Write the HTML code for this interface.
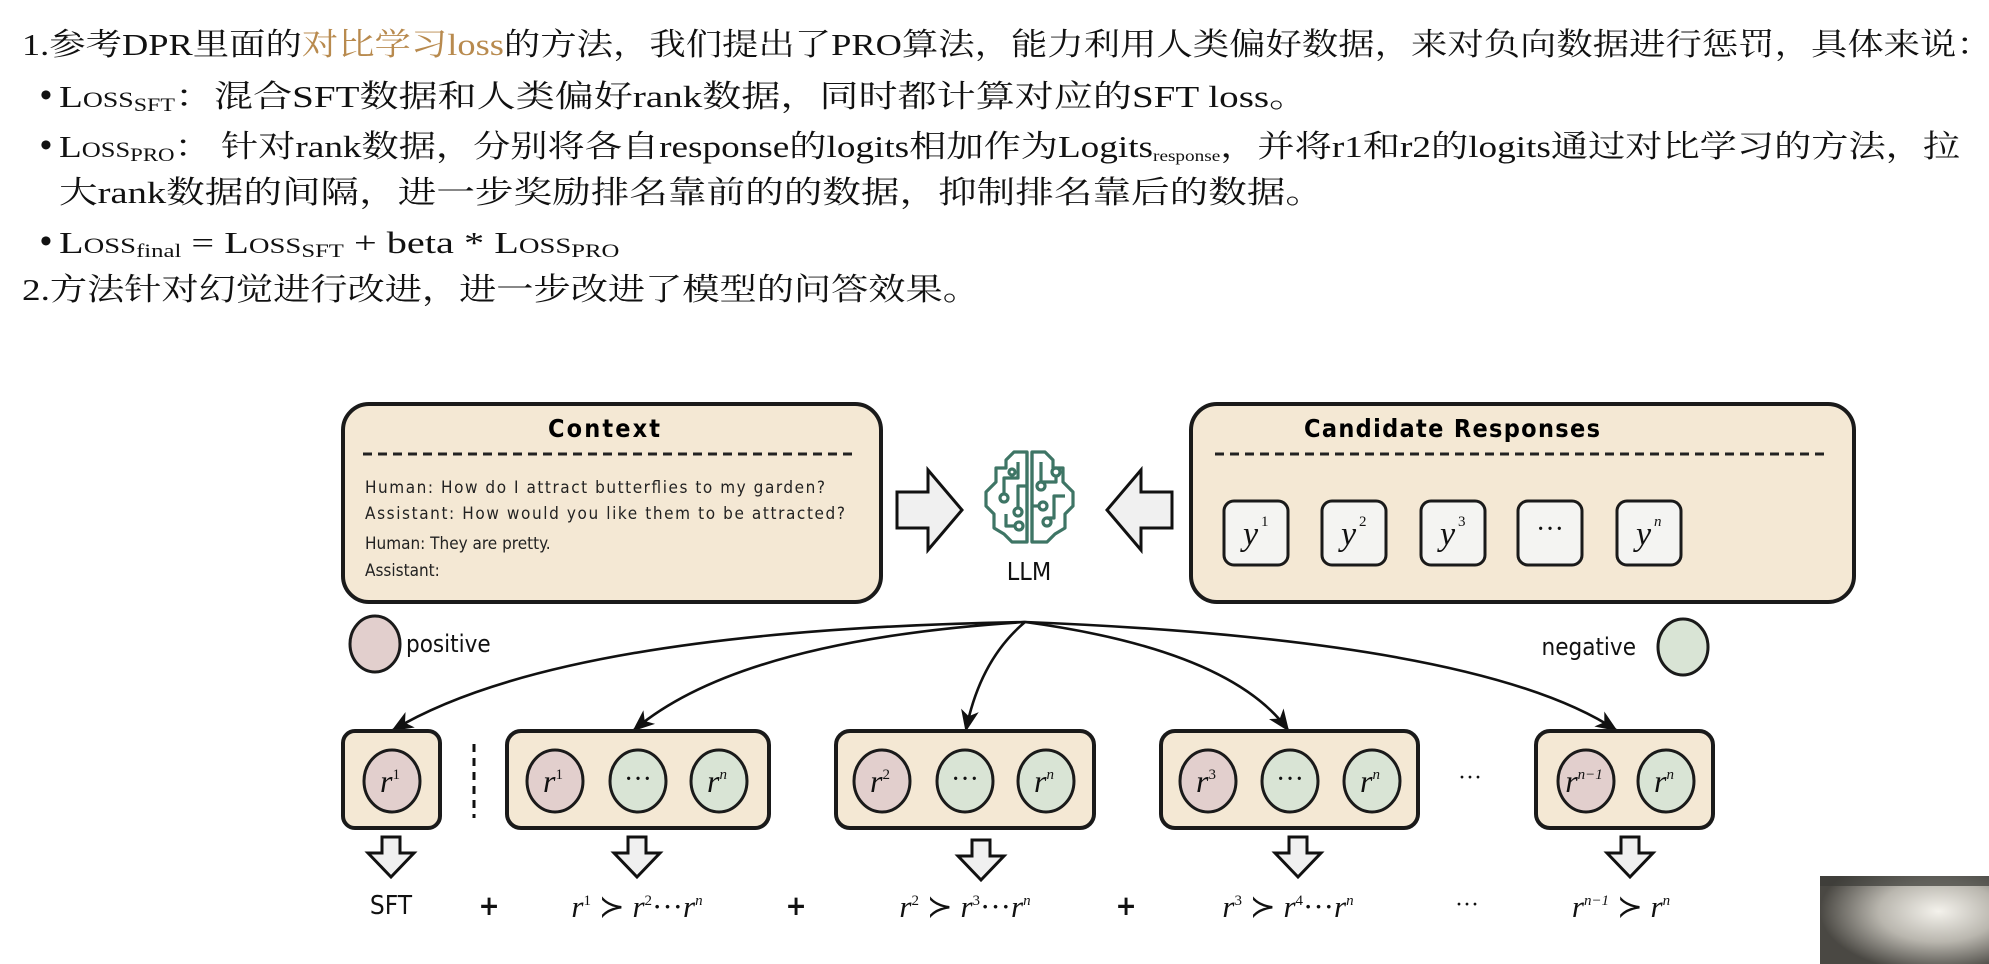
<!DOCTYPE html>
<html><head><meta charset="utf-8">
<style>
html,body{margin:0;padding:0;background:#fff;}
body{width:1989px;height:964px;position:relative;overflow:hidden;font-family:"Liberation Serif","Noto Serif CJK SC",serif;color:#111;}
.l{position:absolute;font-size:31px;line-height:36px;white-space:nowrap;transform:scaleX(1.2);transform-origin:0 0;}
.sc{font-variant:small-caps;}
sub{font-size:19px;vertical-align:-4px;line-height:0;font-variant:small-caps;}
.b{position:absolute;font-size:34px;font-weight:bold;line-height:36px;}
.hl{color:#b88a4e;}
svg{position:absolute;left:0;top:0;}
</style></head><body>
<div class="l" style="left:22px;top:27px;transform:scaleX(1.173);">1.参考DPR里面的<span class="hl">对比学习loss</span>的方法，我们提出了PRO算法，能力利用人类偏好数据，来对负向数据进行惩罚，具体来说：</div>
<div class="b" style="left:40px;top:78px;">•</div>
<div class="l" style="left:59px;top:79px;transform:scaleX(1.26);"><span class="sc">Loss</span><sub>SFT</sub>：混合SFT数据和人类偏好rank数据，同时都计算对应的SFT loss。</div>
<div class="b" style="left:40px;top:128px;">•</div>
<div class="l" style="left:59px;top:129px;"><span class="sc">Loss</span><sub>PRO</sub>： 针对rank数据，分别将各自response的logits相加作为Logits<sub style="font-variant:normal;font-size:16px">response</sub>，并将r1和r2的logits通过对比学习的方法，拉</div>
<div class="l" style="left:59px;top:175px;transform:scaleX(1.245);">大rank数据的间隔，进一步奖励排名靠前的的数据，抑制排名靠后的数据。</div>
<div class="b" style="left:40px;top:224px;">•</div>
<div class="l" style="left:59px;top:225px;transform:scaleX(1.3);"><span class="sc">Loss</span><sub style="font-variant:normal">final</sub> = <span class="sc">Loss</span><sub>SFT</sub> + beta * <span class="sc">Loss</span><sub>PRO</sub></div>
<div class="l" style="left:22px;top:272px;">2.方法针对幻觉进行改进，进一步改进了模型的问答效果。</div>

<svg width="1989" height="964" viewBox="0 0 1989 964">
<defs>
<marker id="ah2" markerWidth="22" markerHeight="22" refX="20" refY="11" orient="auto" markerUnits="userSpaceOnUse" viewBox="0 0 22 22"><path d="M0,2 L22,11 L0,20 L6,11 Z" fill="#111"/></marker>
</defs>
<g font-family="'Liberation Sans Narrow','DejaVu Sans Condensed','Liberation Sans',sans-serif">
<rect x="343" y="404" width="538" height="198" rx="26" fill="#f4e8d4" stroke="#1a1a1a" stroke-width="4"/>
<text x="604" y="437" font-size="25" font-weight="bold" text-anchor="middle" textLength="112">Context</text>
<line x1="363" y1="454" x2="852" y2="454" stroke="#222" stroke-width="3" stroke-dasharray="9,6"/>
<g font-size="17" fill="#222">
<text x="365" y="493" textLength="460">Human: How do I attract butterflies to my garden?</text>
<text x="365" y="519" textLength="480">Assistant: How would you like them to be attracted?</text>
<text x="365" y="549">Human: They are pretty.</text>
<text x="365" y="576">Assistant:</text>
</g>
<rect x="1191" y="404" width="663" height="198" rx="26" fill="#f4e8d4" stroke="#1a1a1a" stroke-width="4"/>
<text x="1452" y="437" font-size="25" font-weight="bold" text-anchor="middle" textLength="296">Candidate Responses</text>
<line x1="1215" y1="454" x2="1830" y2="454" stroke="#222" stroke-width="3" stroke-dasharray="9,6"/>
<g stroke="#1a1a1a" stroke-width="3" fill="#f4f4f2">
<rect x="1224" y="501" width="64" height="64" rx="10"/>
<rect x="1322" y="501" width="64" height="64" rx="10"/>
<rect x="1421" y="501" width="64" height="64" rx="10"/>
<rect x="1518" y="501" width="64" height="64" rx="10"/>
<rect x="1617" y="501" width="64" height="64" rx="10"/>
</g>
<g font-family="'Liberation Serif',serif" font-style="italic" font-size="34" fill="#111">
<text x="1243" y="545">y</text><text x="1261" y="526" font-size="15" font-style="normal">1</text>
<text x="1341" y="545">y</text><text x="1359" y="526" font-size="15" font-style="normal">2</text>
<text x="1440" y="545">y</text><text x="1458" y="526" font-size="15" font-style="normal">3</text>
<text x="1550" y="538" font-style="normal" text-anchor="middle" font-size="28">···</text>
<text x="1636" y="545">y</text><text x="1654" y="526" font-size="15">n</text>
</g>
<path d="M897,492 L928,492 L928,470 L962,510 L928,550 L928,528 L897,528 Z" fill="#f0f0f0" stroke="#111" stroke-width="3"/>
<path d="M1172,492 L1141,492 L1141,470 L1107,510 L1141,550 L1141,528 L1172,528 Z" fill="#f0f0f0" stroke="#111" stroke-width="3"/>
<g transform="translate(982,448)" fill="none" stroke="#3e7565" stroke-width="3.2" stroke-linejoin="round">
<path d="M45,4 L32,4 L24,12 L24,20 L14,20 L14,34 L4,44 L4,58 L12,66 L12,80 L22,86 L30,94 L45,94 Z"/>
<path d="M50,4 L63,4 L71,12 L71,20 L81,20 L81,34 L91,44 L91,58 L83,66 L83,80 L73,86 L65,94 L50,94 Z"/>
<path d="M45,4 L45,94 M50,4 L50,94"/>
<path d="M36,14 L36,30 L22,30 L22,46"/><circle cx="22" cy="50" r="4"/>
<circle cx="30" cy="24" r="3"/>
<path d="M45,38 L36,38 L36,60"/><circle cx="36" cy="64" r="4"/>
<path d="M24,66 L24,78 L33,78"/><circle cx="37" cy="78" r="4"/>
<path d="M59,14 L59,34"/><circle cx="59" cy="38" r="4"/>
<circle cx="74" cy="24" r="4"/><path d="M74,28 L74,34 L59,34"/>
<path d="M50,58 L57,58"/><circle cx="61" cy="58" r="4"/>
<path d="M83,48 L72,48 L72,70 L65,70"/><circle cx="65" cy="74" r="4"/>
</g>
<text x="1029" y="580" font-size="25" text-anchor="middle" fill="#111">LLM</text>
<ellipse cx="375" cy="644" rx="25" ry="28" fill="#e2cfcd" stroke="#1a1a1a" stroke-width="3"/>
<text x="406" y="652" font-size="24" fill="#111">positive</text>
<ellipse cx="1683" cy="647" rx="25" ry="28" fill="#d9e4d5" stroke="#1a1a1a" stroke-width="3"/>
<text x="1636" y="655" font-size="24" fill="#111" text-anchor="end">negative</text>
<g fill="none" stroke="#111" stroke-width="2.6" marker-end="url(#ah2)">
<path d="M1025,622 Q560,630 393,730"/>
<path d="M1025,622 Q740,640 634,730"/>
<path d="M1025,622 Q980,660 966,730"/>
<path d="M1025,622 Q1230,650 1288,730"/>
<path d="M1025,622 Q1480,640 1616,730"/>
</g>
<g fill="#f4e8d4" stroke="#1a1a1a" stroke-width="4">
<rect x="343" y="731" width="97" height="97" rx="12"/>
<rect x="507" y="731" width="262" height="97" rx="14"/>
<rect x="836" y="731" width="258" height="97" rx="14"/>
<rect x="1161" y="731" width="257" height="97" rx="14"/>
<rect x="1536" y="731" width="177" height="97" rx="14"/>
</g>
<line x1="474" y1="744" x2="474" y2="818" stroke="#111" stroke-width="3" stroke-dasharray="8,6"/>
<g stroke="#1a1a1a" stroke-width="3">
<ellipse cx="392" cy="781" rx="28" ry="31" fill="#e2cfcd"/>
<ellipse cx="555" cy="781" rx="28" ry="31" fill="#e2cfcd"/>
<ellipse cx="638" cy="781" rx="28" ry="31" fill="#d9e4d5"/>
<ellipse cx="719" cy="781" rx="28" ry="31" fill="#d9e4d5"/>
<ellipse cx="882" cy="781" rx="28" ry="31" fill="#e2cfcd"/>
<ellipse cx="965" cy="781" rx="28" ry="31" fill="#d9e4d5"/>
<ellipse cx="1046" cy="781" rx="28" ry="31" fill="#d9e4d5"/>
<ellipse cx="1208" cy="781" rx="28" ry="31" fill="#e2cfcd"/>
<ellipse cx="1290" cy="781" rx="28" ry="31" fill="#d9e4d5"/>
<ellipse cx="1372" cy="781" rx="28" ry="31" fill="#d9e4d5"/>
<ellipse cx="1586" cy="781" rx="28" ry="31" fill="#e2cfcd"/>
<ellipse cx="1666" cy="781" rx="28" ry="31" fill="#d9e4d5"/>
</g>
<g font-family="'Liberation Serif',serif" font-style="italic" font-size="32" fill="#111" text-anchor="middle">
<text x="390" y="792">r<tspan font-size="15" font-style="normal" dy="-13">1</tspan></text>
<text x="553" y="792">r<tspan font-size="15" font-style="normal" dy="-13">1</tspan></text>
<text x="638" y="788" font-style="normal" font-size="28">···</text>
<text x="717" y="792">r<tspan font-size="15" dy="-13">n</tspan></text>
<text x="880" y="792">r<tspan font-size="15" font-style="normal" dy="-13">2</tspan></text>
<text x="965" y="788" font-style="normal" font-size="28">···</text>
<text x="1044" y="792">r<tspan font-size="15" dy="-13">n</tspan></text>
<text x="1206" y="792">r<tspan font-size="15" font-style="normal" dy="-13">3</tspan></text>
<text x="1290" y="788" font-style="normal" font-size="28">···</text>
<text x="1370" y="792">r<tspan font-size="15" dy="-13">n</tspan></text>
<text x="1584" y="792">r<tspan font-size="15" dy="-13">n−1</tspan></text>
<text x="1664" y="792">r<tspan font-size="15" dy="-13">n</tspan></text>
<text x="1470" y="785" font-style="normal" font-size="24">···</text>
</g>
<g fill="#f0f0f0" stroke="#111" stroke-width="3">
<path d="M382,837 L400,837 L400,853 L414,853 L391,877 L368,853 L382,853 Z"/>
<path d="M628,837 L646,837 L646,853 L660,853 L637,877 L614,853 L628,853 Z"/>
<path d="M972,840 L990,840 L990,856 L1004,856 L981,880 L958,856 L972,856 Z"/>
<path d="M1289,837 L1307,837 L1307,853 L1321,853 L1298,877 L1275,853 L1289,853 Z"/>
<path d="M1621,837 L1639,837 L1639,853 L1653,853 L1630,877 L1607,853 L1621,853 Z"/>
</g>
<text x="391" y="914" font-size="26" text-anchor="middle" fill="#111">SFT</text>
<g font-size="28" font-weight="bold" text-anchor="middle" fill="#111">
<text x="489" y="915">+</text><text x="796" y="915">+</text><text x="1126" y="915">+</text>
</g>
<g font-family="'Liberation Serif',serif" font-style="italic" font-size="31" fill="#111" text-anchor="middle">
<text x="637" y="917">r<tspan font-size="15" font-style="normal" dy="-12">1</tspan><tspan dy="12" font-style="normal"> ≻ </tspan>r<tspan font-size="15" font-style="normal" dy="-12">2</tspan><tspan dy="12" font-style="normal">···</tspan>r<tspan font-size="15" dy="-12">n</tspan></text>
<text x="965" y="917">r<tspan font-size="15" font-style="normal" dy="-12">2</tspan><tspan dy="12" font-style="normal"> ≻ </tspan>r<tspan font-size="15" font-style="normal" dy="-12">3</tspan><tspan dy="12" font-style="normal">···</tspan>r<tspan font-size="15" dy="-12">n</tspan></text>
<text x="1288" y="917">r<tspan font-size="15" font-style="normal" dy="-12">3</tspan><tspan dy="12" font-style="normal"> ≻ </tspan>r<tspan font-size="15" font-style="normal" dy="-12">4</tspan><tspan dy="12" font-style="normal">···</tspan>r<tspan font-size="15" dy="-12">n</tspan></text>
<text x="1621" y="917">r<tspan font-size="15" dy="-12">n−1</tspan><tspan dy="12" font-style="normal"> ≻ </tspan>r<tspan font-size="15" dy="-12">n</tspan></text>
<text x="1467" y="912" font-style="normal" font-size="24">···</text>
</g>
</g>
<defs><radialGradient id="cam" cx="0.7" cy="0.4" r="0.7"><stop offset="0" stop-color="#f4f2ec"/><stop offset="0.5" stop-color="#b9b6ae"/><stop offset="1" stop-color="#4a4843"/></radialGradient></defs>
<rect x="1820" y="876" width="169" height="88" fill="url(#cam)"/>
<rect x="1820" y="876" width="169" height="10" fill="#3b3a36" opacity="0.7"/>
</svg>
</body></html>
